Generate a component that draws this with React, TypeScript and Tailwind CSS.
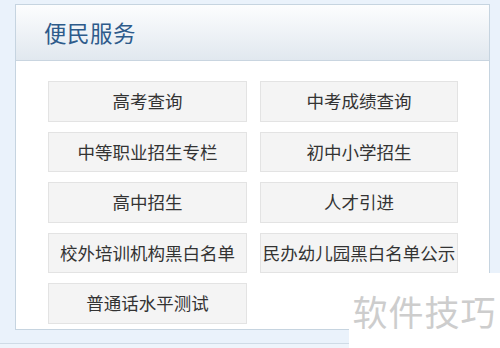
const items = [
  '高考查询',
  '中考成绩查询',
  '中等职业招生专栏',
  '初中小学招生',
  '高中招生',
  '人才引进',
  '校外培训机构黑白名单',
  '民办幼儿园黑白名单公示',
  '普通话水平测试',
];

const cjk = { fontFamily: '"Noto Sans CJK SC", "Noto Sans", sans-serif' };

export default function App() {
  return (
    <div
      className="relative w-[500px] h-[348px] overflow-hidden bg-[#eaf2fb] pt-[4px] pl-[15px]"
      style={cjk}
    >
      <div className="w-[475px] h-[326px] border border-[#c6d4e0] bg-white flex flex-col">
        <div className="h-[56px] shrink-0 border-b border-[#c9d5e0] bg-gradient-to-b from-[#fcfdfe] to-[#e1e8ef] flex items-center pl-[28px]">
          <h2 className="text-[22.5px] leading-none text-[#2d5b8b] tracking-[0.5px]">便民服务</h2>
        </div>
        <div className="pl-[32px] pt-[20px]">
          <div className="grid grid-cols-[199px_198px] gap-x-[13px] gap-y-[10px]">
            {items.map((t) => (
              <div
                key={t}
                className="h-[40.5px] border border-[#e3e3e3] bg-[#f4f4f4] flex items-center justify-center text-[17.5px] text-[#333] whitespace-nowrap overflow-hidden"
              >
                {t}
              </div>
            ))}
          </div>
        </div>
      </div>
      <div className="mt-[13px] -ml-[15px] border-t border-[#cfdbe6] h-[10px] bg-[#eef4fb]" />
      <div className="absolute right-0 top-[273px] w-[151px] h-[75px] bg-white flex items-center justify-center">
        <span className="text-[35px] leading-none text-[#cdcdcd] tracking-[1px]">软件技巧</span>
      </div>
    </div>
  );
}
